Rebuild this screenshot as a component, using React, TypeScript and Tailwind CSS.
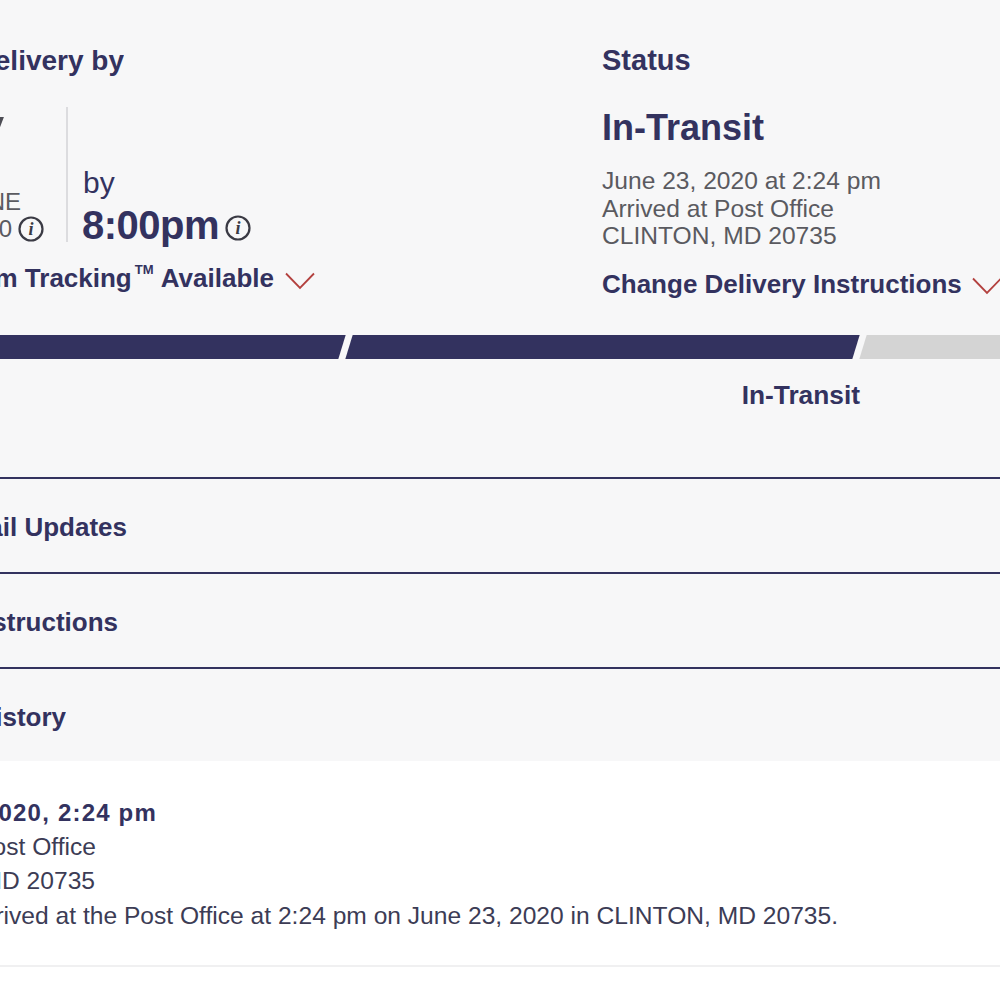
const navy = "text-[#33325f]";

function Chevron({ className }: { className: string }) {
  return (
    <svg className={className} viewBox="0 0 30 18" fill="none" stroke="#b3413f" strokeWidth="1.8">
      <path d="M1 1.5 15 16 29 1.5" />
    </svg>
  );
}

function Info({ className }: { className: string }) {
  return (
    <svg className={className} viewBox="0 0 26 26" fill="none">
      <circle cx="13" cy="13" r="11.5" stroke="#3a3a44" strokeWidth="2.2" />
      <text x="13" y="19" textAnchor="middle" fontSize="18" fontStyle="italic" fontWeight="700" fontFamily="Liberation Serif, serif" fill="#3a3a44">i</text>
    </svg>
  );
}

function Row({ title, widthClass, heightClass }: { title: string; widthClass: string; heightClass: string }) {
  return (
    <div className={`flex items-center pt-[3px] border-t-2 border-[#33325f] ${heightClass}`}>
      <div className={`flex justify-end overflow-hidden whitespace-nowrap text-[26px] font-bold ${navy} ${widthClass}`}>
        <span className="shrink-0">{title}</span>
      </div>
    </div>
  );
}

export default function App() {
  return (
    <div className="w-[1000px] h-[1000px] overflow-hidden bg-white font-['Liberation_Sans',Arial,sans-serif]">
      <div className="bg-[#f7f7f8] h-[761px]">
        <div className="flex h-[335px] pt-[44px]">
          <div className="w-[602px] shrink-0">
            <div className={`flex justify-end overflow-hidden whitespace-nowrap w-[124px] h-[34px] leading-[34px] text-[28px] font-bold ${navy}`}>
              <span className="shrink-0">Expected Delivery by</span>
            </div>
            <div className="flex mt-[29px] h-[135px]">
              <div className="w-[68px] shrink-0 border-r-2 border-[#dcdcdf] overflow-hidden flex flex-col">
                <div className="flex justify-end w-[4px] h-[80px] leading-[40px] text-[50px] text-[#4d4d55] whitespace-nowrap">
                  <span className="shrink-0">Tuesday</span>
                </div>
                <div className="flex justify-end w-[21px] mt-[3px] h-[27px] leading-[27px] text-[24px] text-[#5a5a60] whitespace-nowrap">
                  <span className="shrink-0">JUNE</span>
                </div>
                <div className="flex items-center mt-px h-[26px]">
                  <div className="flex justify-end w-[12px] leading-[26px] text-[24px] text-[#5a5a60] whitespace-nowrap">
                    <span className="shrink-0">2020</span>
                  </div>
                  <Info className="w-[26px] h-[26px] ml-[6px] shrink-0" />
                </div>
              </div>
              <div className="pl-[14px] pt-[59px]">
                <div className={`pl-px h-[34px] leading-[34px] text-[30px] ${navy}`}>by</div>
                <div className="flex items-center h-[50px]">
                  <span className={`text-[40px] leading-[50px] font-bold tracking-[-0.5px] ${navy}`}>8:00pm</span>
                  <Info className="w-[26px] h-[26px] ml-[6px] mt-[5px] shrink-0" />
                </div>
              </div>
            </div>
            <div className="flex items-center mt-[16px] h-[40px]">
              <div className={`flex justify-end overflow-hidden whitespace-nowrap w-[274px] text-[26px] font-bold leading-[40px] ${navy}`}>
                <span className="shrink-0">Premium Tracking<sup className="relative -top-[13px] ml-[3px] mr-px text-[13px] font-bold">TM</sup> Available</span>
              </div>
              <Chevron className="w-[30px] h-[18px] ml-[11px] mt-[5px] shrink-0" />
            </div>
          </div>
          <div className="flex-1 min-w-0">
            <div className={`h-[32px] leading-[32px] text-[29px] font-bold ${navy}`}>Status</div>
            <div className={`mt-[30px] h-[44px] leading-[44px] text-[36px] font-bold ${navy}`}>In-Transit</div>
            <div className="mt-[17px] text-[24.6px] leading-[27.5px] text-[#5a5a60] whitespace-nowrap">
              <div>June 23, 2020 at 2:24 pm</div>
              <div>Arrived at Post Office</div>
              <div>CLINTON, MD 20735</div>
            </div>
            <div className="flex items-center mt-[15px] h-[40px] whitespace-nowrap">
              <span className={`text-[26px] font-bold ${navy}`}>Change Delivery Instructions</span>
              <Chevron className="w-[30px] h-[18px] ml-[10px] mt-[3px] shrink-0" />
            </div>
          </div>
        </div>

        <div className="flex gap-[7px] h-[24px] overflow-hidden">
          <div className="-ml-[20px] w-[362px] shrink-0 -skew-x-[17deg] bg-[#33325f]" />
          <div className="w-[507px] shrink-0 -skew-x-[17deg] bg-[#33325f]" />
          <div className="w-[200px] shrink-0 -skew-x-[17deg] bg-[#d4d4d4]" />
        </div>

        <div className="h-[118px] flex justify-end pr-[140px] pt-[20px]">
          <span className={`text-[26.3px] leading-[32px] font-bold ${navy}`}>In-Transit</span>
        </div>

        <Row title="Text & Email Updates" widthClass="w-[127px]" heightClass="h-[95px]" />
        <Row title="Delivery Instructions" widthClass="w-[118px]" heightClass="h-[95px]" />
        <Row title="Tracking History" widthClass="w-[66px]" heightClass="h-[96px]" />
      </div>

      <div className="h-[205px] bg-white pt-[35px]">
        <div className="flex justify-end w-[157px] whitespace-nowrap h-[34px] leading-[34px] text-[24px] font-bold tracking-[1.2px] text-[#33325f]">
          <span className="shrink-0">June 23, 2020, 2:24 pm</span>
        </div>
        <div className="flex justify-end w-[96px] whitespace-nowrap h-[34px] leading-[34px] text-[24.6px] text-[#3c3c55]">
          <span className="shrink-0">Arrived at Post Office</span>
        </div>
        <div className="flex justify-end w-[95px] whitespace-nowrap h-[34px] leading-[34px] text-[24.6px] text-[#3c3c55]">
          <span className="shrink-0">CLINTON, MD 20735</span>
        </div>
        <div className="flex justify-end w-[838px] whitespace-nowrap h-[36px] leading-[36px] text-[24.6px] text-[#3c3c55]">
          <span className="shrink-0">Your item arrived at the Post Office at 2:24 pm on June 23, 2020 in CLINTON, MD 20735.</span>
        </div>
        <div className="mt-[31px] border-t-2 border-[#f0f0f1]" />
      </div>
    </div>
  );
}
